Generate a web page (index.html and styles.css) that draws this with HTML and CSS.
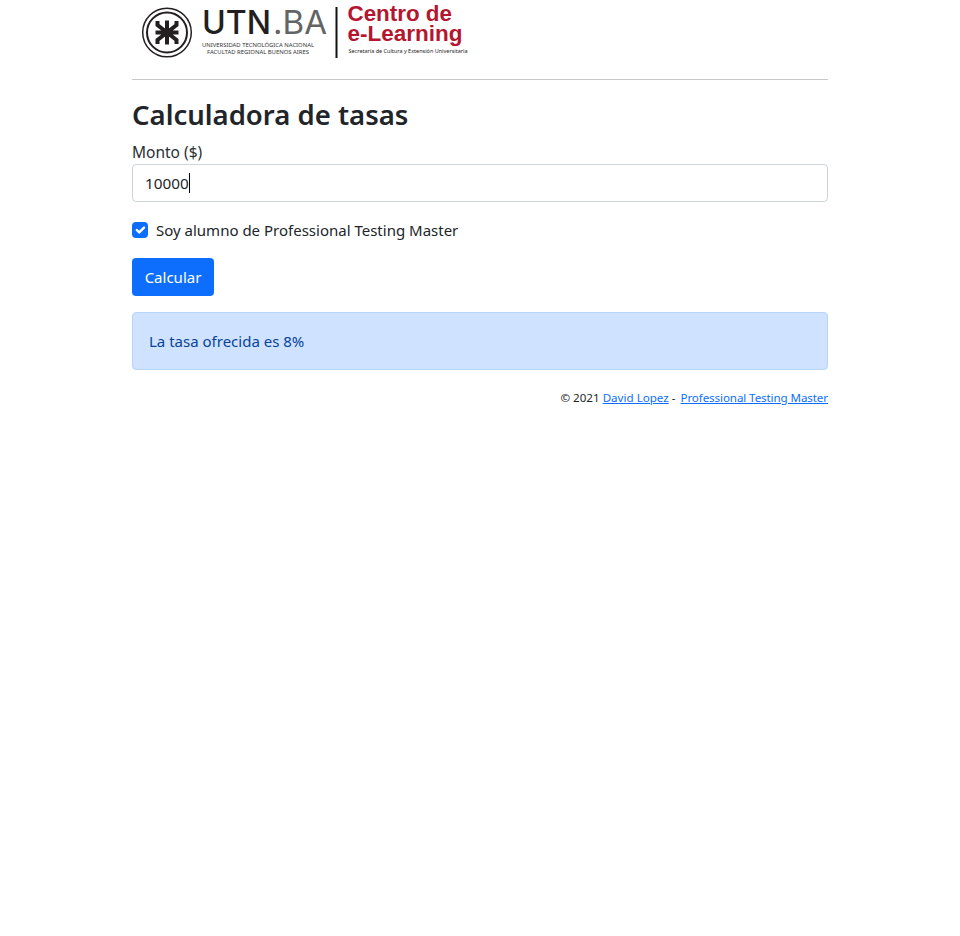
FILE: index.html
```html
<!DOCTYPE html>
<html lang="es">

<head>
    <meta charset="UTF-8">
    <meta name="viewport" content="width=device-width, initial-scale=1.0">
    <title>Calculadora de tasas</title>
    <link rel="stylesheet" href="styles.css">
</head>

<body>
    <div class="container">
        <header class="logo">
            <svg width="360" height="62" viewBox="0 0 360 62" role="img" aria-label="UTN.BA Centro de e-Learning">
                <circle cx="35" cy="32.500" r="24.300" fill="none" stroke="#231f20" stroke-width="1.500"/>
                <circle cx="35" cy="32.500" r="20" fill="none" stroke="#231f20" stroke-width="2"/>
                <path d="M35 20.500V44.500M23.500 32.500H46.500M25.500 21V25L35 32.500L44.500 25V21M25.500 44V40L35 32.500L44.500 40V44" fill="none" stroke="#231f20" stroke-width="4"/>
                <text x="70" y="33.500" class="utn" textLength="69" lengthAdjust="spacingAndGlyphs">UTN</text>
                <text x="141" y="33.500" class="ba" textLength="54" lengthAdjust="spacingAndGlyphs">.BA</text>
                <text x="70" y="46.500" class="tiny" textLength="112" lengthAdjust="spacingAndGlyphs">UNIVERSIDAD TECNOLÓGICA NACIONAL</text>
                <text x="75" y="54" class="tiny" textLength="102" lengthAdjust="spacingAndGlyphs">FACULTAD REGIONAL BUENOS AIRES</text>
                <rect x="203.500" y="7" width="2" height="51" fill="#111"/>
                <text x="215.500" y="21" class="centro" textLength="104.500" lengthAdjust="spacingAndGlyphs">Centro de</text>
                <text x="215.500" y="41" class="centro" textLength="115" lengthAdjust="spacingAndGlyphs">e-Learning</text>
                <text x="216.500" y="52.500" class="tiny dark" textLength="119" lengthAdjust="spacingAndGlyphs">Secretaría de Cultura y Extensión Universitaria</text>
            </svg>
        </header>
        <hr class="divider">

        <h1 class="title">Calculadora de tasas</h1>

        <form class="form">
            <label class="field-label">Monto ($)</label>
            <div class="form-control">10000<span class="caret"></span></div>

            <label class="check">
                <span class="check-box">
                    <svg width="16" height="16" viewBox="0 0 20 20"><path d="M6 10l3 3l6-6" fill="none" stroke="#fff" stroke-width="3" stroke-linecap="round" stroke-linejoin="round"/></svg>
                </span>
                Soy alumno de Professional Testing Master
            </label>

            <button type="button" class="btn">Calcular</button>
        </form>

        <div class="alert">La tasa ofrecida es 8%</div>

        <footer class="footer">
            © 2021 <a href="#">David Lopez</a> - <a href="#" class="footer-site">Professional Testing Master</a>
        </footer>
    </div>
</body>

</html>
```

FILE: styles.css
```css
* {
    box-sizing: border-box;
}

body {
    margin: 0;
    background-color: #fff;
    color: #212529;
    font-family: 'Noto Sans', sans-serif;
    font-size: 15px;
    line-height: 24px;
}

.container {
    width: 720px;
    margin: 0 auto;
    padding: 0 12px;
}

.logo {
    height: 63px;
}

.logo svg {
    display: block;
}

.utn {
    font-family: 'Inter', sans-serif;
    font-size: 32px;
    font-weight: 500;
    fill: #231f20;
}

.ba {
    font-family: 'Inter', sans-serif;
    font-size: 32px;
    font-weight: 400;
    fill: #636466;
}

.tiny {
    font-family: 'Noto Sans', sans-serif;
    font-size: 6px;
    fill: #333;
}

.tiny.dark {
    fill: #222;
}

.centro {
    font-family: 'Liberation Sans', sans-serif;
    font-size: 22px;
    font-weight: bold;
    fill: #b5162f;
}

.divider {
    height: 1px;
    margin: 16px 0 0;
    border: 0;
    background-color: #c8c8c8;
}

.title {
    margin: 15px 0 9px;
    font-size: 27.500px;
    font-weight: 600;
    line-height: 40px;
}

.form {
    display: flex;
    flex-direction: column;
    align-items: flex-start;
}

.field-label {
    height: 20px;
    font-size: 15.500px;
    line-height: 16px;
    color: #2b3035;
}

.form-control {
    width: 100%;
    height: 38px;
    padding: 6px 12px;
    border: 1px solid #ced4da;
    border-radius: 4px;
    font-size: 15.300px;
}

.caret {
    display: inline-block;
    width: 1px;
    height: 20px;
    background-color: #000;
    vertical-align: -4px;
}

.check {
    display: flex;
    align-items: center;
    gap: 8px;
    height: 24px;
    margin-top: 16px;
}

.check-box {
    width: 16px;
    height: 16px;
    border-radius: 4px;
    background-color: #0d6efd;
}

.check-box svg {
    display: block;
}

.btn {
    width: 82px;
    height: 38px;
    margin-top: 16px;
    padding: 0;
    border: 0;
    border-radius: 4px;
    background-color: #0d6efd;
    color: #fff;
    font-family: inherit;
    font-size: inherit;
}

.alert {
    height: 58px;
    margin-top: 16px;
    padding: 16px;
    border: 1px solid #b6d4fe;
    border-radius: 4px;
    background-color: #cfe2ff;
    color: #084298;
}

.footer {
    margin-top: 16px;
    font-size: 11.600px;
    line-height: 24px;
    text-align: right;
}

.footer a {
    color: #0d6efd;
}

.footer-site {
    margin-left: 2px;
    letter-spacing: -0.100px;
}
```
